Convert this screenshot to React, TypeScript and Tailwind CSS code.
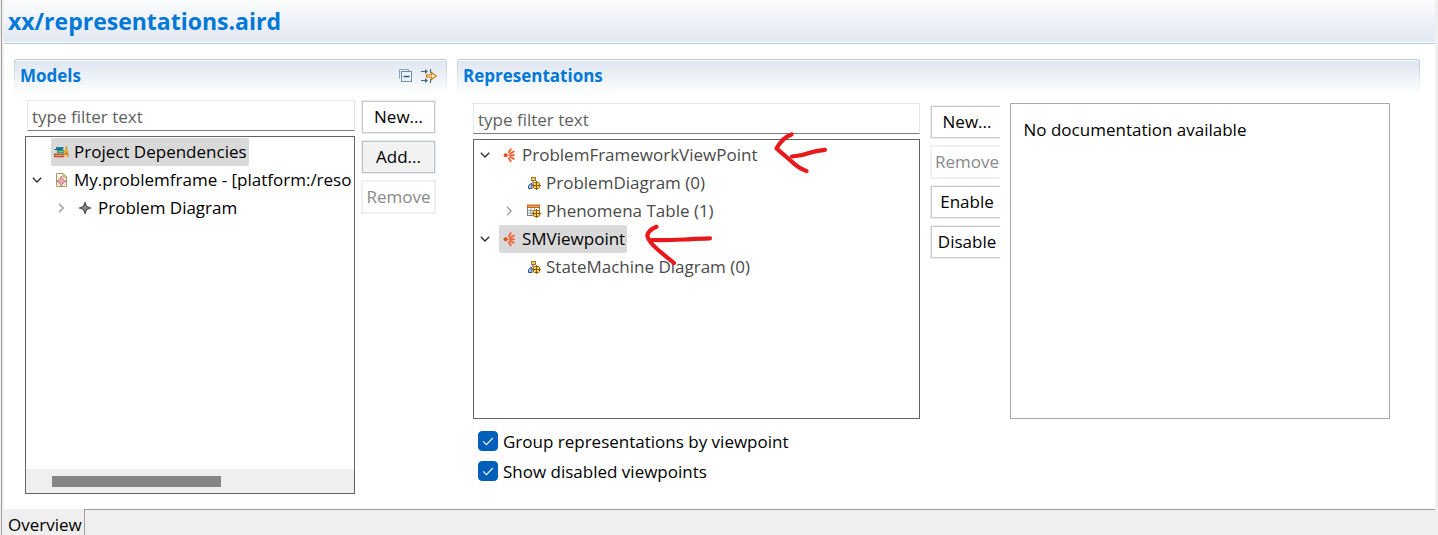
import type { ReactNode } from "react";

function ChevronDown() {
  return (
    <svg width="10" height="10" viewBox="0 0 10 10" fill="none" stroke="#2b2b2b" strokeWidth="1.3">
      <path d="M0.8 2.8 L5 7 L9.2 2.8" />
    </svg>
  );
}

function ChevronRight() {
  return (
    <svg width="10" height="10" viewBox="0 0 10 10" fill="none" stroke="#9a9a9a" strokeWidth="1.3">
      <path d="M3 0.8 L7.2 5 L3 9.2" />
    </svg>
  );
}

function BooksIcon() {
  return (
    <svg width="16" height="16" viewBox="0 0 16 16" className="shrink-0">
      <path d="M3 3h7.5v2.2H3z" fill="#1d7fae" />
      <path d="M1.5 5h8v1H1.5z" fill="#215e7a" />
      <path d="M4 6h7.5v3.2H4z" fill="#2a9a72" />
      <path d="M5.2 7.2h5.5v1H5.2z" fill="#8fd0b0" />
      <path d="M1 9.5h10v3.8H1z" fill="#b85532" />
      <path d="M2.2 10.8h8.4v1.3H2.2z" fill="#e69a72" />
      <path d="M12.6 2.5l1.2-.7 2 10.6-1.6.6z" fill="#e08a12" />
      <path d="M12.4 3l-1.6 9.8h1.8L14 6z" fill="#f3b432" />
      <path d="M11.6 9.2h3.2v1h-3.2z" fill="#a6610c" />
    </svg>
  );
}

function ModelFileIcon() {
  return (
    <svg width="16" height="16" viewBox="0 0 16 16" className="shrink-0">
      <path d="M3.5 1.5h6.5l3.5 3.5v9.5h-10z" fill="#fdfbf3" stroke="#b39a55" />
      <path d="M10 1.5v3.5h3.5z" fill="#ead9a2" stroke="#b39a55" strokeWidth=".8" />
      <path d="M8.3 4.2l1.5 3.6 3.7 1.5-3.7 1.5-1.5 3.7-1.5-3.7-3.7-1.5 3.7-1.5z" fill="#f0bcbc" stroke="#c26b6e" strokeWidth=".9" />
      <path d="M4.6 5.6l7.4 7.4M12 5.6l-7.4 7.4" stroke="#c98a8c" strokeWidth=".6" />
    </svg>
  );
}

function DiamondIcon() {
  return (
    <svg width="16" height="16" viewBox="0 0 16 16" className="shrink-0">
      <path d="M8 2.6l1.5 3.9 3.9 1.5-3.900 1.500-1.500 3.900-1.500-3.900-3.900-1.500 3.900-1.500z" fill="#8f8f8f" stroke="#484848" strokeWidth="1.1" />
    </svg>
  );
}

function ViewpointIcon() {
  return (
    <svg width="16" height="16" viewBox="0 0 16 16" className="shrink-0">
      <g stroke="#ee6a3c" strokeWidth="2" strokeLinecap="round">
        <path d="M7.900 5.200L9.700 2.200" />
        <path d="M9.200 6.600L12.800 4.600" />
        <path d="M9.200 8.200H12.900" />
        <path d="M9.200 9.800L12.800 11.800" />
        <path d="M7.900 11.200L9.700 14.200" />
      </g>
      <circle cx="4.600" cy="8.200" r="2" fill="#e2501f" />
      <path d="M6 8.200h3" stroke="#ee6a3c" strokeWidth="1" />
    </svg>
  );
}

function Crosshair() {
  return (
    <g>
      <rect x="8.500" y="7.500" width="6" height="6" rx="1" fill="#ffd75e" stroke="#9a6408" />
      <path d="M11.500 6v9M7 10.500h9" stroke="#8a5806" strokeWidth="1.1" />
    </g>
  );
}

function DiagramIcon() {
  return (
    <svg width="16" height="16" viewBox="0 0 16 16" className="shrink-0">
      <rect x="6.500" y="2.500" width="4" height="3" fill="#f7d26a" stroke="#a6751d" />
      <path d="M8 5.500v2L5.500 9" stroke="#4a5f86" fill="none" />
      <path d="M3.500 13.500v-2.500l1.500-2h2v4.500z" fill="#a9c6ec" stroke="#36568f" strokeLinejoin="round" />
      <Crosshair />
    </svg>
  );
}

function TableIcon() {
  return (
    <svg width="16" height="16" viewBox="0 0 16 16" className="shrink-0">
      <rect x="2.500" y="2.500" width="12" height="10" fill="#fff" stroke="#7e7c78" />
      <path d="M2 1.500h13v3.500H2z" fill="#c8641e" />
      <path d="M3 2.700h11v1.100H3z" fill="#f2b060" />
      <path d="M3 7.500h11M3 10h11M6 5v7.500M9.500 5v7.500" stroke="#8f9099" strokeWidth=".9" />
      <Crosshair />
    </svg>
  );
}

function CollapseAllIcon() {
  return (
    <svg width="16" height="16" viewBox="0 0 16 16">
      <path d="M1.500 10.500v-9h9v1.500" fill="none" stroke="#8ba3bd" />
      <rect x="3.500" y="3.500" width="10" height="10" fill="#eaf4fc" stroke="#6f8ba8" />
      <path d="M5.500 8.500h6" stroke="#174f8a" strokeWidth="1.4" />
    </svg>
  );
}

function LinkIcon() {
  return (
    <svg width="18" height="16" viewBox="0 0 18 16" fill="none">
      <g stroke="#49657f" strokeWidth="1.1">
        <path d="M1 3.500h6M1 12.500h6M10.500 1v4M10.500 11v4" />
        <path d="M5 1l3 2.500L5 6zM5 10l3 2.500L5 15z" fill="#49657f" stroke="none" />
      </g>
      <path d="M6.500 6.800h5V4.500L16.300 8l-4.800 3.500V9.200h-5z" fill="#fff2c4" stroke="#c78419" strokeWidth="1.2" />
    </svg>
  );
}

type RowProps = {
  icon: ReactNode;
  label: string;
  level?: 0 | 1;
  state?: "open" | "closed";
  selected?: boolean;
  dimmed?: boolean;
};

function TreeRow({ icon, label, level = 0, state, selected, dimmed }: RowProps) {
  return (
    <li
      role="treeitem"
      aria-level={level + 1}
      aria-selected={!!selected}
      aria-expanded={state ? state === "open" : undefined}
      className={`flex h-7 items-center ${level ? "pl-6" : ""}`}
    >
      <span className="flex w-[25px] shrink-0 items-center pl-1.5">
        {state === "open" && <ChevronDown />}
        {state === "closed" && <ChevronRight />}
      </span>
      <span
        className={`flex h-7 items-center gap-[5px] rounded-xs px-0.5 whitespace-nowrap ${
          selected ? "bg-[#d9d9d9]" : ""
        } ${dimmed ? "text-[#4a4a4a]" : "text-black"}`}
      >
        {icon}
        {label}
      </span>
    </li>
  );
}

function PushButton({ children, disabled, hot }: { children: ReactNode; disabled?: boolean; hot?: boolean }) {
  const look = disabled
    ? "border-[#f0f0f0] bg-white text-[#8a8a8a] shadow-[inset_0_0_0_1px_#f0f0f0]"
    : hot
      ? "border-[#ececec] bg-[#f2f2f2] text-black shadow-[inset_0_0_0_1px_#b9c4ce]"
      : "border-[#ececec] bg-white text-black shadow-[inset_0_0_0_1px_#c8c8c8]";
  return (
    <button
      type="button"
      disabled={disabled}
      className={`h-[34px] w-[75px] shrink-0 border text-center whitespace-nowrap ${look}`}
    >
      {children}
    </button>
  );
}

function FilterInput({ label }: { label: string }) {
  return (
    <input
      type="text"
      aria-label={label}
      placeholder="type filter text"
      className="h-[31px] w-full min-w-0 border border-[#e6e6e6] border-b-[#7d7d7d] bg-white px-1 pt-0.5 outline-none placeholder:text-[#5f5f5f]"
    />
  );
}

function Section({ title, tools, children }: { title: string; tools?: ReactNode; children: ReactNode }) {
  return (
    <section className="flex min-w-0 flex-col">
      <div className="rounded-t-[3px] bg-linear-to-b from-[#b9c9db] to-white px-px pt-px">
        <header className="flex h-[35px] items-center justify-between rounded-t-xs border-t border-white bg-linear-to-b from-[#dfe7f1] to-white pr-2 pb-1 pl-[5px]">
          <h2 className="text-[17px] font-bold text-[#0078d7]">{title}</h2>
          {tools}
        </header>
      </div>
      {children}
    </section>
  );
}

function CheckOption({ id, label }: { id: string; label: string }) {
  return (
    <div className="flex h-[30px] items-center gap-[5px]">
      <span className="relative flex size-5">
        <input
          id={id}
          type="checkbox"
          defaultChecked
          className="peer size-5 appearance-none rounded-[4px] border border-[#8a8a8a] bg-white checked:border-[#005fb8] checked:bg-[#005fb8]"
        />
        <svg
          className="pointer-events-none absolute inset-0 hidden peer-checked:block"
          width="20"
          height="20"
          viewBox="0 0 20 20"
          fill="none"
          stroke="#fff"
          strokeWidth="1.1"
        >
          <path d="M5.200 10.400l3.200 3.200 6.400-6.600" />
        </svg>
      </span>
      <label htmlFor={id} className="pt-0.5 whitespace-nowrap">
        {label}
      </label>
    </div>
  );
}

function InkArrows() {
  return (
    <svg
      className="pointer-events-none absolute -top-3 left-[166px]"
      width="200"
      height="150"
      viewBox="640 128 200 150"
      fill="none"
      stroke="#e8191c"
      strokeWidth="4.2"
      strokeLinecap="round"
      strokeLinejoin="round"
    >
      <path d="M791.500 134.500C786 136.500 780 142 776.500 148.500C780 151.500 785 155.500 790 160C795 165 799 168.500 806.500 171" />
      <path d="M792 156.500C801 156 804 155 809 153C814 151.200 819 150.300 825 149.800" />
      <path d="M656.500 226.800C651 229 648 232 647.300 235.500C648 240 651 243.500 656 248C662 253.500 668 258 674 263" />
      <path d="M651.500 240C663 240.300 673 240 684 239.500C693 239 701 238.500 710 238.300" />
    </svg>
  );
}

export default function App() {
  return (
    <div className="flex min-h-screen bg-[#efefef] font-['Open_Sans','Noto_Sans',sans-serif] text-[17px] leading-6 text-black">
      <div className="ml-px flex min-w-0 flex-1 flex-col border-l border-[#a0a0a0] pl-0.5">
        <div className="mr-[3px] flex flex-1 flex-col bg-white">
          <header className="border-b border-[#b5c8da] pb-px">
            <div className="flex h-[42px] items-center bg-linear-to-b from-[#fdfdfe] to-[#e1e8f2] pl-1">
              <h1 className="text-[23px] font-bold text-[#0078d7]">xx/representations.aird</h1>
            </div>
          </header>

          <main className="grid flex-1 grid-cols-[433fr_963fr] gap-2.5 pt-[15px] pr-[15px] pb-[15px] pl-2.5">
            <Section
              title="Models"
              tools={
                <div className="flex items-center gap-1.5">
                  <button type="button" aria-label="Collapse all">
                    <CollapseAllIcon />
                  </button>
                  <button type="button" aria-label="Link with editor">
                    <LinkIcon />
                  </button>
                </div>
              }
            >
              <div className="flex flex-1 gap-1.5 pt-[5px] pr-[11px] pl-[11px]">
                <div className="flex min-w-0 flex-1 flex-col gap-[5px]">
                  <div className="flex pl-0.5">
                    <FilterInput label="Filter models" />
                  </div>
                  <div className="flex flex-1 flex-col justify-between border border-[#646464]">
                    <ul role="tree" aria-label="Models" className="overflow-hidden pt-px">
                      <TreeRow icon={<BooksIcon />} label="Project Dependencies" selected />
                      <TreeRow icon={<ModelFileIcon />} label="My.problemframe - [platform:/reso" state="open" />
                      <TreeRow icon={<DiamondIcon />} label="Problem Diagram" level={1} state="closed" />
                    </ul>
                    <div className="flex h-6 items-center bg-[#efefef] pl-[26px]">
                      <div className="h-[11px] w-[56%] bg-[#858585]" />
                    </div>
                  </div>
                </div>
                <div className="flex flex-col gap-1.5">
                  <PushButton>New...</PushButton>
                  <PushButton hot>Add...</PushButton>
                  <PushButton disabled>Remove</PushButton>
                </div>
              </div>
            </Section>

            <Section title="Representations">
              <div className="grid flex-1 grid-cols-[446fr_70px_380fr] gap-2.5 pt-2 pr-[30px] pl-4">
                <div className="flex min-w-0 flex-col">
                  <FilterInput label="Filter representations" />
                  <div className="relative mt-[5px] flex-1 border border-[#646464]">
                    <ul role="tree" aria-label="Representations" className="pt-px">
                      <TreeRow icon={<ViewpointIcon />} label="ProblemFrameworkViewPoint" state="open" dimmed />
                      <TreeRow icon={<DiagramIcon />} label="ProblemDiagram (0)" level={1} dimmed />
                      <TreeRow icon={<TableIcon />} label="Phenomena Table (1)" level={1} state="closed" dimmed />
                      <TreeRow icon={<ViewpointIcon />} label="SMViewpoint" state="open" selected />
                      <TreeRow icon={<DiagramIcon />} label="StateMachine Diagram (0)" level={1} dimmed />
                    </ul>
                    <InkArrows />
                  </div>
                  <div className="pt-[7px] pb-2 pl-[5px]">
                    <CheckOption id="group" label="Group representations by viewpoint" />
                    <CheckOption id="disabled" label="Show disabled viewpoints" />
                  </div>
                </div>
                <div className="flex flex-col gap-1.5 overflow-hidden pt-0.5">
                  <PushButton>New...</PushButton>
                  <PushButton disabled>Remove</PushButton>
                  <PushButton>Enable</PushButton>
                  <PushButton>Disable</PushButton>
                </div>
                <div className="mb-[75px] min-w-0 border border-[#a9a9ad] px-[13px] py-3.5">
                  No documentation available
                </div>
              </div>
            </Section>
          </main>
        </div>

        <nav className="-ml-0.5 flex h-[26px]">
          <a href="#overview" className="h-[26px] border-r border-[#a0a0a0] pt-1 pr-0.5 pl-1.5 whitespace-nowrap">
            Overview
          </a>
          <div className="mr-[3px] flex-1 border-t border-[#a0a0a0]" />
        </nav>
      </div>
    </div>
  );
}
